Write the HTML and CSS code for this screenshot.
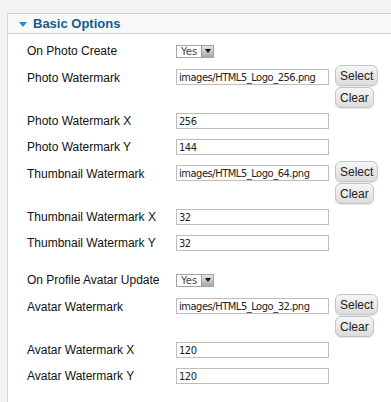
FILE: index.html
```html
<!DOCTYPE html>
<html>
<head>
    <title>Basic Options</title>
    <meta charset="utf-8" />
    <link rel="stylesheet" href="styles.css">
</head>
<body>
    <div class="panel">
        <div class="panel-head">
            <span class="arrow"></span>
            <span class="title">Basic Options</span>
        </div>
        <div class="panel-body">
            <div class="row">
                <label>On Photo Create</label>
                <div class="yesno"><span>Yes</span><span class="drop"></span></div>
            </div>
            <div class="row tall">
                <label>Photo Watermark</label>
                <div class="field">
                    <input type="text" value="images/HTML5_Logo_256.png">
                    <div class="btns">
                        <button>Select</button>
                        <button>Clear</button>
                    </div>
                </div>
            </div>
            <div class="row">
                <label>Photo Watermark X</label>
                <input type="text" value="256">
            </div>
            <div class="row">
                <label>Photo Watermark Y</label>
                <input type="text" value="144">
            </div>
            <div class="row tall">
                <label>Thumbnail Watermark</label>
                <div class="field">
                    <input type="text" value="images/HTML5_Logo_64.png">
                    <div class="btns">
                        <button>Select</button>
                        <button>Clear</button>
                    </div>
                </div>
            </div>
            <div class="row">
                <label>Thumbnail Watermark X</label>
                <input type="text" value="32">
            </div>
            <div class="row">
                <label>Thumbnail Watermark Y</label>
                <input type="text" value="32">
            </div>

            <div class="row spaced">
                <label>On Profile Avatar Update</label>
                <div class="yesno"><span>Yes</span><span class="drop"></span></div>
            </div>
            <div class="row tall">
                <label>Avatar Watermark</label>
                <div class="field">
                    <input type="text" value="images/HTML5_Logo_32.png">
                    <div class="btns">
                        <button>Select</button>
                        <button>Clear</button>
                    </div>
                </div>
            </div>
            <div class="row">
                <label>Avatar Watermark X</label>
                <input type="text" value="120">
            </div>
            <div class="row">
                <label>Avatar Watermark Y</label>
                <input type="text" value="120">
            </div>
        </div>
    </div>
</body>
</html>
```

FILE: styles.css
```css
html, body {
    margin: 0;
    padding: 0;
}

body {
    background-color: #f3f3f3;
    padding: 13px 0 0 7px;
    height: 402px;
    box-sizing: border-box;
    overflow: hidden;
    font-family: "Liberation Sans", Arial, sans-serif;
}

.panel {
    height: 100%;
    background-color: white;
    border-top: 1px solid #cfcfcf;
    border-left: 1px solid #d8d8d8;
}

.panel-head {
    display: flex;
    align-items: center;
    height: 19px;
    background-color: #f9f9f9;
    border-bottom: 1px solid #cfcfcf;
    padding-left: 11px;
}

.arrow {
    width: 0;
    height: 0;
    border-left: 4px solid transparent;
    border-right: 4px solid transparent;
    border-top: 5px solid #2b8bc4;
    margin-top: 2px;
    margin-right: 6px;
}

.title {
    font-size: 13px;
    font-weight: bold;
    color: #135c8e;
}

.panel-body {
    padding-top: 4px;
}

.row {
    display: flex;
    align-items: center;
    height: 26px;
}

.row.tall {
    height: 44px;
    align-items: flex-start;
    padding-top: 1px;
    box-sizing: border-box;
}

.row.spaced {
    margin-top: 11px;
}

label {
    width: 149px;
    padding-left: 19px;
    font-size: 12px;
    color: #111;
    flex: none;
}

.row.tall label {
    margin-top: 6px;
}

input[type=text] {
    width: 153px;
    height: 16px;
    box-sizing: border-box;
    border: 1px solid #bdbdbd;
    padding: 0 0 0 2px;
    margin: 0;
    font-family: "DejaVu Sans Condensed", "DejaVu Sans", sans-serif;
    font-size: 11px;
    letter-spacing: -0.45px;
    color: #222;
    background: white;
}

.field {
    display: flex;
    align-items: flex-start;
}

.field input[type=text] {
    margin-top: 4px;
}

.btns {
    display: flex;
    flex-direction: column;
    align-items: flex-start;
    gap: 1px;
    margin-left: 6px;
}

button {
    height: 21px;
    padding: 0 4px;
    border: 1px solid #c4c4c4;
    border-radius: 6px;
    background: linear-gradient(#f6f6f6, #dcdcdc);
    font-family: "Liberation Sans", Arial, sans-serif;
    font-size: 12px;
    color: #222;
    box-shadow: 0 1px 1px rgba(0,0,0,0.1);
}

.yesno {
    display: flex;
    align-items: stretch;
    width: 38px;
    height: 13px;
    box-sizing: border-box;
    border: 1px solid #a5a5a5;
    background: white;
}

.yesno span:first-child {
    flex: 1;
    font-family: "DejaVu Sans", sans-serif;
    font-size: 10px;
    line-height: 11px;
    color: #444;
    padding-left: 4px;
}

.drop {
    width: 11px;
    background: linear-gradient(#e4e4e4, #a8a8a8);
    border-left: 1px solid #999;
    display: flex;
    align-items: center;
    justify-content: center;
}

.drop::after {
    content: "";
    border-left: 3px solid transparent;
    border-right: 3px solid transparent;
    border-top: 4px solid #111;
}
```
